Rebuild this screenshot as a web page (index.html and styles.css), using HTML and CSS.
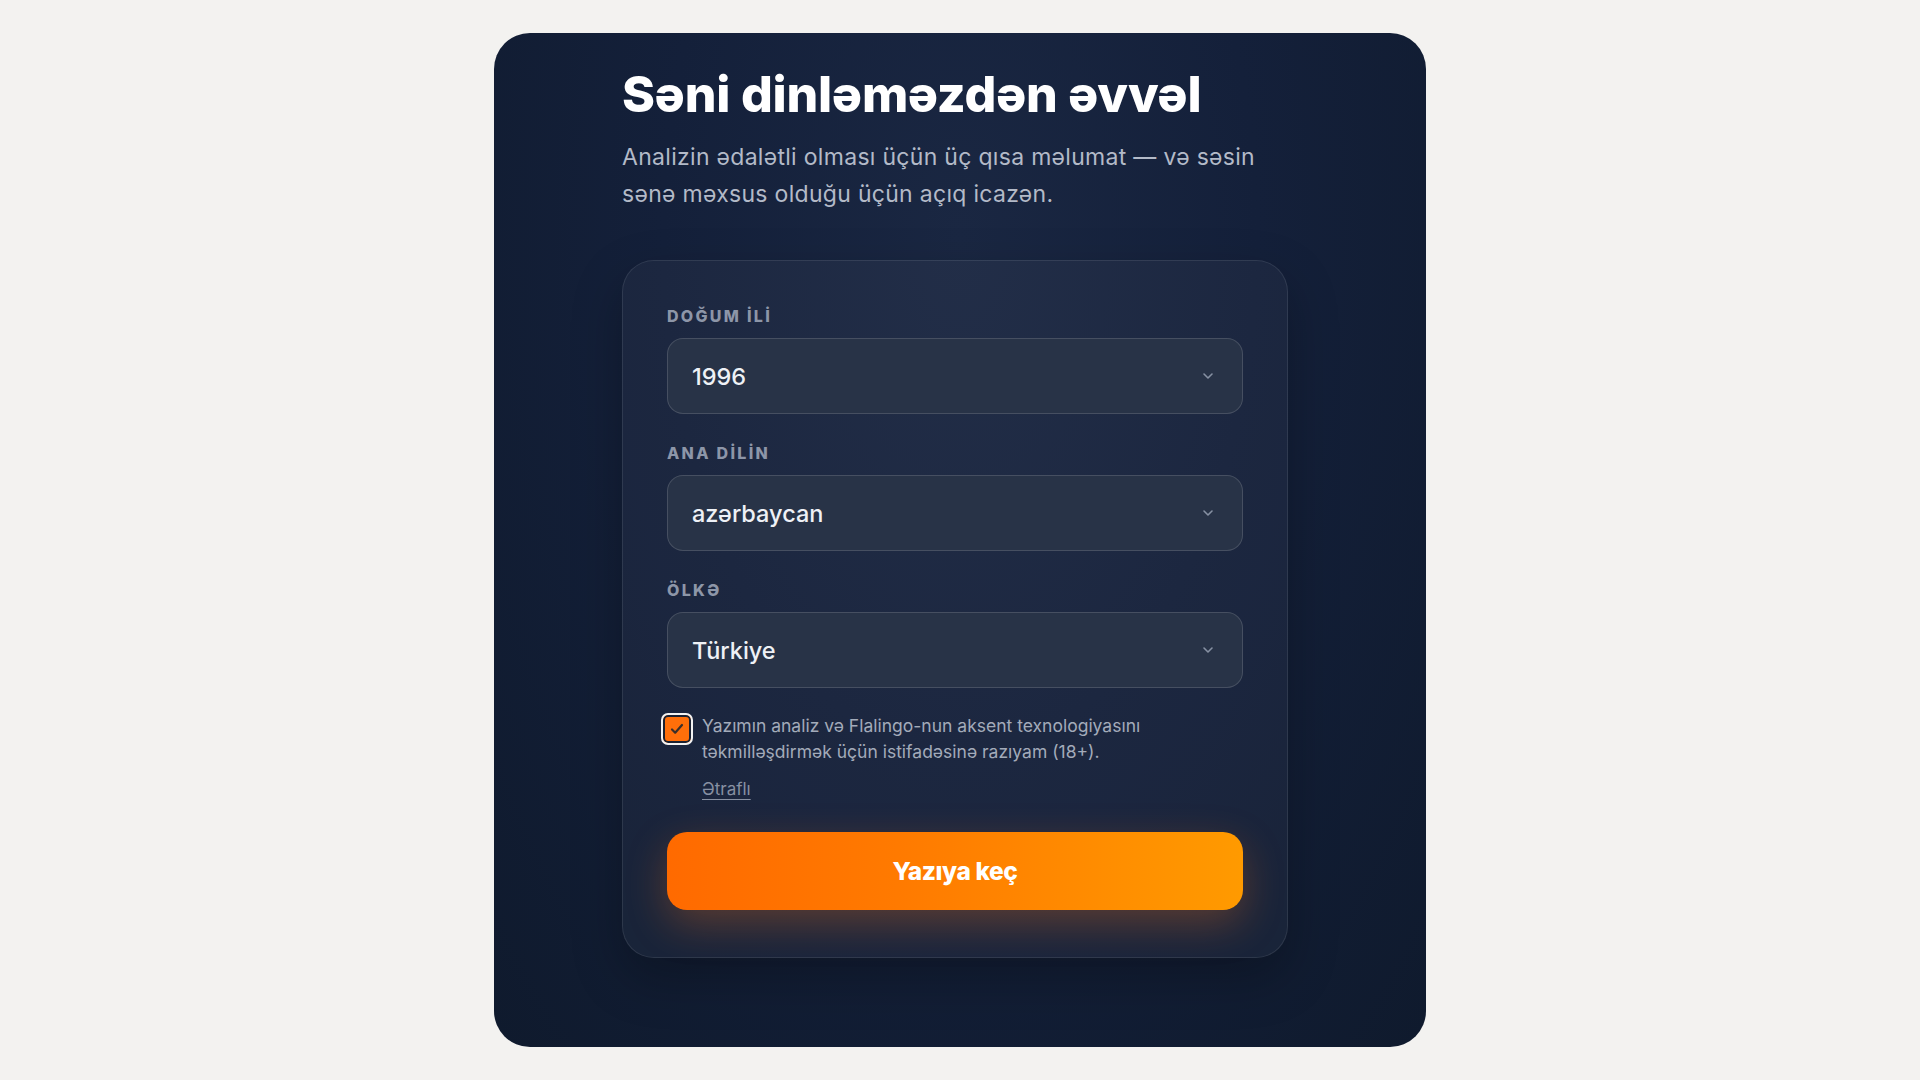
FILE: index.html
```html
<!DOCTYPE html>
<html lang="az">
<head>
<meta charset="utf-8">
<title>Səni dinləməzdən əvvəl</title>
<link rel="stylesheet" href="styles.css">
</head>
<body>
<main class="card">
  <div class="content">
    <h1 class="title">Səni dinləməzdən əvvəl</h1>
    <p class="subtitle">Analizin ədalətli olması üçün üç qısa məlumat — və səsin sənə məxsus olduğu üçün açıq icazən.</p>
    <form class="panel">
      <div class="field">
        <label class="label">DOĞUM İLİ</label>
        <div class="select"><span class="value">1996</span>
          <svg class="chev" viewBox="0 0 12 8" width="12" height="8"><path d="M2 2l4 4 4-4" fill="none" stroke="#8791a3" stroke-width="1.6" stroke-linecap="round" stroke-linejoin="round"/></svg>
        </div>
      </div>
      <div class="field">
        <label class="label">ANA DİLİN</label>
        <div class="select"><span class="value">azərbaycan</span>
          <svg class="chev" viewBox="0 0 12 8" width="12" height="8"><path d="M2 2l4 4 4-4" fill="none" stroke="#8791a3" stroke-width="1.6" stroke-linecap="round" stroke-linejoin="round"/></svg>
        </div>
      </div>
      <div class="field">
        <label class="label">ÖLKƏ</label>
        <div class="select"><span class="value">Türkiye</span>
          <svg class="chev" viewBox="0 0 12 8" width="12" height="8"><path d="M2 2l4 4 4-4" fill="none" stroke="#8791a3" stroke-width="1.6" stroke-linecap="round" stroke-linejoin="round"/></svg>
        </div>
      </div>
      <div class="consent">
        <span class="check">
          <svg viewBox="0 0 20 20" width="20" height="20"><path d="M5 10.5l3.2 3.2L15 6" fill="none" stroke="#3a2f2a" stroke-width="2.2" stroke-linecap="round" stroke-linejoin="round"/></svg>
        </span>
        <div class="consent-text">
          <p>Yazımın analiz və Flalingo-nun aksent texnologiyasını təkmilləşdirmək üçün istifadəsinə razıyam (18+).</p>
          <a class="more" href="#">Ətraflı</a>
        </div>
      </div>
      <button type="button" class="btn">Yazıya keç</button>
    </form>
  </div>
</main>
</body>
</html>
```

FILE: styles.css
```css
* { box-sizing: border-box; }
html, body { margin: 0; padding: 0; }
body {
  background: #f3f2f0;
  font-family: Inter, "Noto Sans", sans-serif;
  display: flex;
  justify-content: center;
  padding: 33px 0;
  height: 1080px;
}
.card {
  width: 932px;
  height: 1014px;
  border-radius: 36px;
  background: radial-gradient(ellipse at 50% 20%, #1a2742 0%, #14203a 45%, #0f1a2d 100%);
  display: flex;
  justify-content: center;
  overflow: hidden;
}
.content {
  width: 666px;
  padding-top: 29px;
  margin-left: -10px;
}
.title {
  margin: 0;
  color: #ffffff;
  font-size: 50px;
  font-weight: 800;
  letter-spacing: -0.2px;
  line-height: 64px;
}
.subtitle {
  margin: 13px 0 0;
  color: #b3bac8;
  font-size: 23px;
  line-height: 37px;
  letter-spacing: 0.3px;
  width: 660px;
}
.panel {
  margin-top: 47px;
  border: 1px solid rgba(255,255,255,0.09);
  background: rgba(255,255,255,0.035);
  border-radius: 32px;
  padding: 46px 44px 47px;
  box-shadow: 0 20px 50px rgba(0,0,0,0.25);
}
.field { display: flex; flex-direction: column; gap: 13px; margin-bottom: 30px; }
.field:nth-child(3) { margin-bottom: 25px; }
.label {
  color: #8d96a8;
  font-size: 16px;
  font-weight: 800;
  letter-spacing: 2.3px;
  line-height: 18px;
}
.select {
  height: 76px;
  border-radius: 16px;
  background: #283347;
  border: 1px solid rgba(255,255,255,0.14);
  display: flex;
  align-items: center;
  justify-content: space-between;
  padding: 0 28px 0 24px;
}
.value {
  color: #eef1f6;
  font-size: 23.5px;
  font-weight: 500;
  letter-spacing: 0;
}
.consent { display: flex; gap: 9px; align-items: flex-start; margin-left: -6px; }
.check {
  flex: none;
  width: 32px;
  height: 32px;
  border-radius: 7px;
  border: 2px solid #f2f2f2;
  background: #ff6f0a;
  box-shadow: inset 0 0 0 2px #1a2131;
  display: flex;
  align-items: center;
  justify-content: center;
}
.consent-text p {
  margin: 0;
  max-width: 480px;
  color: #a3abba;
  font-size: 17.5px;
  line-height: 26px;
  letter-spacing: 0;
}
.more {
  display: inline-block;
  margin-top: 14px;
  color: #8790a2;
  font-size: 17px;
  letter-spacing: 0;
  text-decoration: underline;
  text-underline-offset: 4px;
}
.btn {
  display: block;
  width: 100%;
  height: 78px;
  margin-top: 33px;
  border: none;
  border-radius: 20px;
  background: linear-gradient(90deg, #ff6a00 0%, #ff7a00 40%, #ff9a00 100%);
  color: #ffffff;
  font-family: Inter, "Noto Sans", sans-serif;
  font-size: 24.5px;
  font-weight: 800;
  letter-spacing: -0.4px;
  box-shadow: 0 14px 40px rgba(255,120,20,0.28);
}
```
